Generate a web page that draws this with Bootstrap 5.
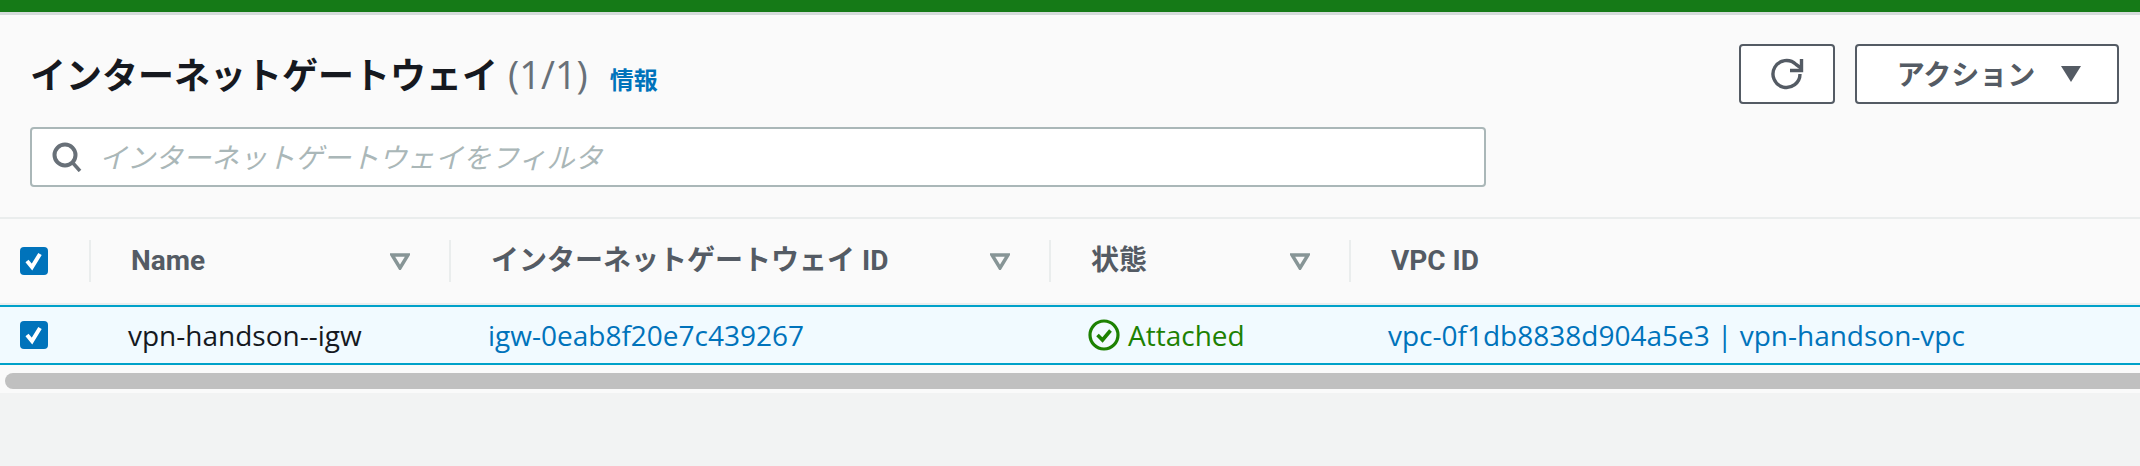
<!DOCTYPE html>
<html lang="ja">
<head>
    <meta charset="UTF-8">
    <title>インターネットゲートウェイ</title>
    <link rel="stylesheet" href="https://cdn.jsdelivr.net/npm/bootstrap@5.3.0/dist/css/bootstrap.min.css">
    <style>
        html, body { height: 100%; }
        body { background: #f2f3f3; font-family: "Open Sans", "Noto Sans CJK JP", sans-serif; overflow: hidden; }
        .top-strip { height: 15px; background: #157a17; border-bottom: 3px solid #d5dbdb; }
        .panel-head { background: #fafafa; padding: 29px 21px 30px 30px; border-bottom: 2px solid #eaeded; }
        .head-row { height: 60px; margin-bottom: 23px; }
        .page-title { font-size: 36px; font-weight: 700; color: #16191f; margin: 0; line-height: 1; }
        .page-count { font-size: 38px; font-weight: 400; color: #687078; margin-left: 10px; }
        .info-link { font-size: 24px; font-weight: 700; color: #0073bb; text-decoration: none; margin-left: 22px; }
        .tool-btn { height: 60px; border: 2px solid #545b64; border-radius: 4px; background: #fff; color: #545b64; font-size: 28px; font-weight: 700; }
        .tool-btn:hover { background: #fafafa; color: #545b64; border-color: #545b64; }
        .btn-refresh { width: 96px; }
        .btn-action { width: 264px; gap: 26px; }
        .btn-action.p-0 { padding-left: 4px !important; }
        .tool-gap { gap: 20px; }
        .search-box { width: 1456px; height: 60px; background: #fff; border: 2px solid #aab7b8; border-radius: 4px; padding-left: 20px; }
        .search-box input { border: 0; outline: 0; background: transparent; flex: 1; margin-left: 17px; font-size: 28px; padding: 0; }
        .search-box input::placeholder { color: #aab7b8; font-style: italic; opacity: 1; }
        .data-table { --bs-table-bg: transparent; table-layout: fixed; width: 2140px; margin: 0; border-collapse: separate; border-spacing: 0; }
        .data-table th, .data-table td { padding: 0; border: 0; vertical-align: middle; }
        .data-table thead th { height: 86px; background: #fafafa; border-bottom: 2px solid #eaeded; color: #545b64; font-family: Roboto, "Noto Sans CJK JP", sans-serif; font-size: 28px; font-weight: 700; }
        .data-table tbody td { height: 60px; background: #f1faff; border-top: 2px solid #00a1c9; border-bottom: 2px solid #00a1c9; font-size: 28px; color: #16191f; }
        .head-cell { height: 42px; border-left: 2px solid #eaeded; padding: 0 39px 0 40px; }
        .body-cell { padding-left: 39px; }
        .data-table .tick-cell { padding-left: 20px; }
        .tick { width: 28px; height: 28px; background: #0073bb; border-radius: 4px; }
        .data-table a { color: #0073bb; text-decoration: none; }
        .status-ok { color: #1d8102; gap: 8px; }
        .scroll-area { background: #fafafa; padding: 8px 0 4px 5px; }
        .scroll-thumb { height: 16px; background: #c0c0c0; border-radius: 8px 0 0 8px; }
    </style>
</head>
<body>
<div class="top-strip"></div>

<div class="panel-head">
    <div class="head-row d-flex justify-content-between align-items-center">
        <div class="d-flex align-items-baseline">
            <h1 class="page-title">インターネットゲートウェイ</h1>
            <span class="page-count">(1/1)</span>
            <a href="#" class="info-link">情報</a>
        </div>
        <div class="d-flex tool-gap">
            <button type="button" class="btn tool-btn btn-refresh d-flex align-items-center justify-content-center p-0" aria-label="更新">
                <svg width="34" height="34" viewBox="0 0 34 34" fill="none" stroke="#545b64" stroke-width="3.4">
                    <path d="M30 17a13.5 13.5 0 1 1-4-9.6L31 11"/>
                    <path d="M31.5 2v11.5H20"/>
                </svg>
            </button>
            <button type="button" class="btn tool-btn btn-action d-flex align-items-center justify-content-center p-0">
                <span>アクション</span>
                <svg width="20" height="16" viewBox="0 0 20 16"><path d="M0 0h20L10 16z" fill="#545b64"/></svg>
            </button>
        </div>
    </div>
    <div class="search-box d-flex align-items-center">
        <svg width="30" height="30" viewBox="0 0 30 30" fill="none" stroke="#687078" stroke-width="4">
            <circle cx="13" cy="13" r="10.5"/>
            <path d="M20 20l8 9" stroke-width="3.5"/>
        </svg>
        <input type="text" placeholder="インターネットゲートウェイをフィルタ">
    </div>
</div>

<table class="table data-table">
    <colgroup>
        <col style="width:89px"><col style="width:360px"><col style="width:600px"><col style="width:300px"><col>
    </colgroup>
    <thead>
    <tr>
        <th class="tick-cell">
            <div class="tick d-flex align-items-center justify-content-center">
                <svg width="20" height="20" viewBox="0 0 20 20" fill="none" stroke="#fff" stroke-width="4"><path d="M3 10l5 6 8-13"/></svg>
            </div>
        </th>
        <th>
            <div class="head-cell d-flex justify-content-between align-items-center">
                <span>Name</span>
                <svg width="20" height="17" viewBox="0 0 20 17" fill="none" stroke="#879596" stroke-width="3.5"><path d="M2 2h16l-8 13z"/></svg>
            </div>
        </th>
        <th>
            <div class="head-cell d-flex justify-content-between align-items-center">
                <span>インターネットゲートウェイ ID</span>
                <svg width="20" height="17" viewBox="0 0 20 17" fill="none" stroke="#879596" stroke-width="3.5"><path d="M2 2h16l-8 13z"/></svg>
            </div>
        </th>
        <th>
            <div class="head-cell d-flex justify-content-between align-items-center">
                <span>状態</span>
                <svg width="20" height="17" viewBox="0 0 20 17" fill="none" stroke="#879596" stroke-width="3.5"><path d="M2 2h16l-8 13z"/></svg>
            </div>
        </th>
        <th>
            <div class="head-cell d-flex align-items-center">
                <span>VPC ID</span>
            </div>
        </th>
    </tr>
    </thead>
    <tbody>
    <tr>
        <td class="tick-cell">
            <div class="tick d-flex align-items-center justify-content-center">
                <svg width="20" height="20" viewBox="0 0 20 20" fill="none" stroke="#fff" stroke-width="4"><path d="M3 10l5 6 8-13"/></svg>
            </div>
        </td>
        <td><div class="body-cell">vpn-handson--igw</div></td>
        <td><div class="body-cell"><a href="#">igw-0eab8f20e7c439267</a></div></td>
        <td>
            <div class="body-cell status-ok d-flex align-items-center">
                <svg width="32" height="32" viewBox="0 0 32 32" fill="none" stroke="#1d8102" stroke-width="3.2">
                    <circle cx="16" cy="16" r="14"/>
                    <path d="M9.5 16l5 5 8-9.5" stroke-width="3.6"/>
                </svg>
                <span>Attached</span>
            </div>
        </td>
        <td><div class="body-cell"><a href="#">vpc-0f1db8838d904a5e3 | vpn-handson-vpc</a></div></td>
    </tr>
    </tbody>
</table>

<div class="scroll-area"><div class="scroll-thumb"></div></div>

<script src="https://cdn.jsdelivr.net/npm/bootstrap@5.3.0/dist/js/bootstrap.bundle.min.js"></script>
</body>
</html>
